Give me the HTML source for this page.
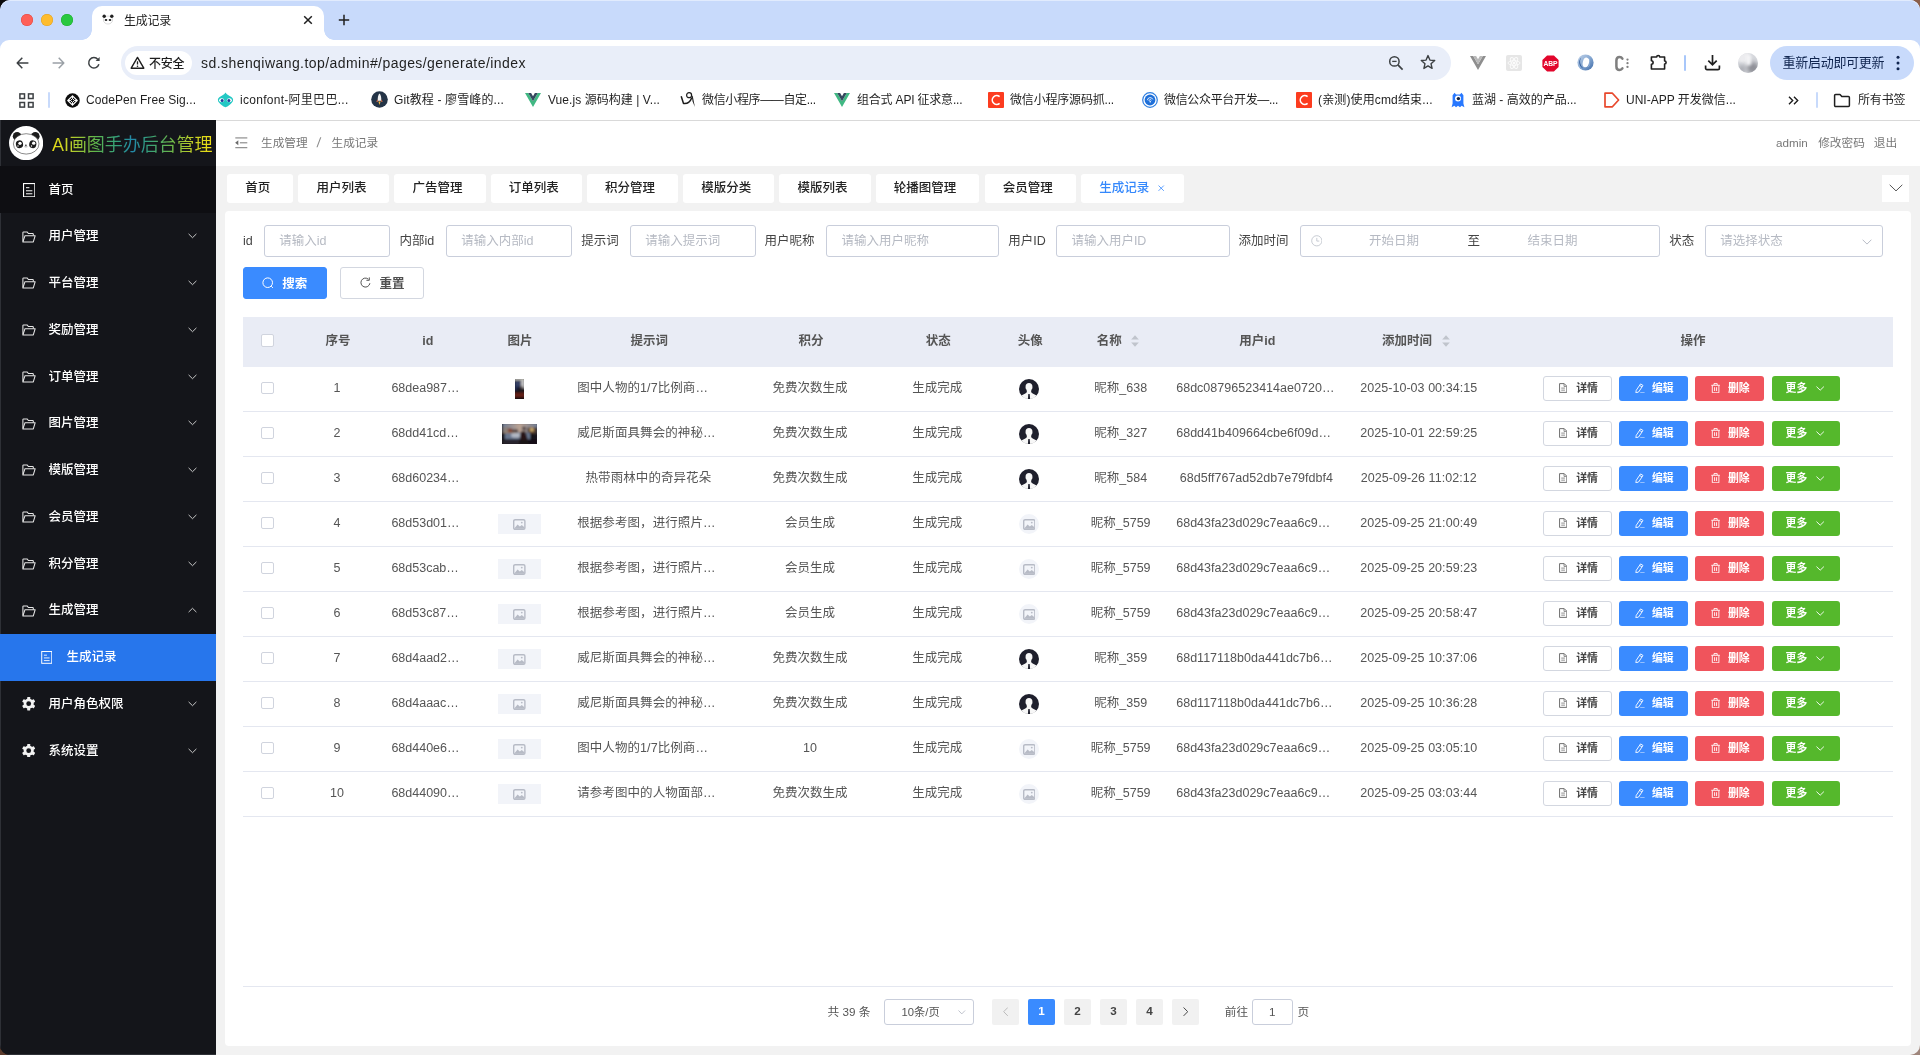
<!DOCTYPE html>
<html lang="zh-CN">
<head>
<meta charset="utf-8">
<title>生成记录</title>
<style>
*{box-sizing:border-box;margin:0;padding:0}
html,body{width:1920px;height:1055px;overflow:hidden;background:#f2f2f2}
body{font-family:"Liberation Sans","Noto Sans CJK SC",sans-serif;color:#303133;position:relative;-webkit-font-smoothing:antialiased}
.abs{position:absolute}
.cnr{position:absolute;width:14px;height:14px}
#win{position:absolute;left:0;top:0;width:1920px;height:1055px;border-radius:10px;overflow:hidden;background:linear-gradient(90deg,#14151a 0,#14151a 216px,#f2f2f2 216px);will-change:transform}
svg{display:block}
/* ---------- browser chrome ---------- */
#chrome{position:absolute;left:0;top:0;width:1920px;height:121px;background:#c8dafb;overflow:hidden}
#chrome .corner{position:absolute;width:12px;height:12px;background:#6b4a3a}
#tabstrip{position:absolute;left:0;top:0;width:1920px;height:40px;background:#c8dafb;border-radius:10px 10px 0 0;box-shadow:inset 0 1px 0 rgba(255,255,255,.45)}
.tl{position:absolute;top:14px;width:12px;height:12px;border-radius:50%}
#tab{position:absolute;left:92px;top:6px;width:232px;height:34px;background:#fff;border-radius:10px 10px 0 0}
#tab:before,#tab:after{content:"";position:absolute;bottom:0;width:10px;height:10px;background:radial-gradient(circle at 0 0,rgba(255,255,255,0) 9.5px,#fff 10px)}
#tab:before{left:-10px}
#tab:after{right:-10px;background:radial-gradient(circle at 100% 0,rgba(255,255,255,0) 9.5px,#fff 10px)}
#tabtitle{position:absolute;left:124px;top:12px;letter-spacing:-.25px;font-size:12px;line-height:18px;color:#1f1f1f}
#toolbar{position:absolute;left:0;top:40px;width:1920px;height:46px;background:#fff;border-radius:9px 9px 0 0}
#omni{position:absolute;left:121px;top:46px;width:1330px;height:34px;border-radius:17px;background:#e9eef9}
#chip{position:absolute;left:125px;top:51px;width:67px;height:24px;border-radius:12px;background:#fff}
#chip span{position:absolute;left:24px;top:3.5px;font-size:12px;line-height:18px;color:#1f1f1f;white-space:nowrap;font-weight:500;letter-spacing:-.2px}
#url{position:absolute;left:201px;top:53px;font-size:14px;line-height:20px;color:#1f1f1f;white-space:nowrap;letter-spacing:.44px}
#bookmarks{position:absolute;left:0;top:86px;width:1920px;height:35px;background:#fff;border-bottom:1px solid #d9d9d9}
.bm{position:absolute;top:91px;height:18px;font-size:12px;line-height:18px;color:#1f1f1f;white-space:nowrap}
.bmi{position:absolute;top:92px;width:16px;height:16px}
#update{position:absolute;left:1770px;top:46px;width:144px;height:34px;border-radius:17px;background:#c8dafb}
#update span{position:absolute;left:12.5px;top:8.4px;font-size:13px;line-height:18px;color:#10254f;white-space:nowrap;letter-spacing:-.28px}
/* ---------- page ---------- */
#side{position:absolute;left:0;top:120px;width:215.7px;height:935px;background:#14151a;overflow:hidden;box-shadow:inset 1px 0 0 #2e3036,inset 0 -1px 0 #2e3036}
#side .logo{position:absolute;left:9px;top:5.6px;width:34.2px;height:34.2px}
#side .title{position:absolute;left:52px;top:11.5px;font-size:18px;line-height:26px;white-space:nowrap;letter-spacing:-.05px;background:linear-gradient(90deg,#e9dc18 0%,#b9cf2a 12%,#5fb64c 27%,#2f9c80 42%,#2288aa 50%,#36a07a 60%,#6fb848 75%,#c8d224 88%,#efdf12 100%);-webkit-background-clip:text;background-clip:text;color:transparent;-webkit-text-fill-color:transparent}
#side .item{position:absolute;left:0;width:216px;height:47px}
#side .item.home{background:#0e0e12}
#side .item.act{background:#2776ec}
#side .mi{position:absolute}
#side .mt{position:absolute;font-size:12.5px;line-height:20px;color:#fff;font-weight:500;white-space:nowrap}
#head{position:absolute;left:216px;top:121px;width:1704px;height:45px;background:#fff}
.bc{position:absolute;top:133px;font-size:11.67px;line-height:20px;color:#777;white-space:nowrap}
.bc.hr{color:#777}
.tab{position:absolute;top:174px;height:29px;background:#fff;border-radius:3px;font-size:12.5px;line-height:29px;text-align:left;padding-left:18.2px;color:#222;font-weight:500;white-space:nowrap}
.tab.on{color:#3488fc}
#card{position:absolute;left:225px;top:211px;width:1686px;height:834.6px;background:#fff;border-radius:4px}
.fl{position:absolute;top:230.6px;font-size:12.5px;line-height:20px;color:#444;white-space:nowrap}
.ph{position:absolute;top:230.6px;font-size:12.5px;line-height:20px;color:#b6bac3;white-space:nowrap}
.inp{position:absolute;top:225.2px;height:31.6px;border:1px solid #c9cedb;border-radius:3px;background:#fff}
.inp span{position:absolute;left:14.2px;top:4.4px;font-size:12.5px;line-height:20px;color:#b6bac3;white-space:nowrap}
.btn{position:absolute;top:267px;height:31.8px;border:1px solid #d3d7e0;border-radius:3px;background:#fff}
.btn.pri{background:#3a8bff;border-color:#3a8bff}
.bt{position:absolute;top:273.8px;font-size:12.5px;line-height:20px;color:#505050;font-weight:700;white-space:nowrap}
.bt.w{color:#fff}
#thead{position:absolute;left:243px;top:317.3px;width:1650px;height:49.3px;background:#e9ecf5}
.th{position:absolute;top:331px;width:120px;text-align:center;font-size:12.5px;line-height:20px;color:#555;font-weight:700;white-space:nowrap}
.td{position:absolute;width:180px;text-align:center;font-size:12.5px;line-height:20px;color:#555;white-space:nowrap}
.ck{position:absolute;width:12.6px;height:12.6px;border:1px solid #d0d4de;border-radius:2px;background:#fff}
.rl{position:absolute;left:243px;width:1650px;height:1px;background:#e4e7f0}
.ob{position:absolute;height:25px;border-radius:3px}
.ot{position:absolute;font-size:10.83px;line-height:18px;color:#fff;font-weight:700;white-space:nowrap}
.pg{position:absolute;font-size:11.67px;line-height:20px;color:#555;white-space:nowrap}
.pb{position:absolute;top:999.1px;width:26.8px;height:25.6px;border-radius:2px;background:#f1f1f1;font-size:11.67px;line-height:24.6px;font-weight:700;color:#444;text-align:center}
.pb.on{background:#3a8bff;color:#fff}

</style>
</head>
<body>
<div class="cnr" style="left:0;top:0;background:#0b0b0d"></div><div class="cnr" style="right:0;top:0;background:#8a5e4a"></div><div class="cnr" style="left:0;bottom:0;background:#5a3a2c"></div><div class="cnr" style="right:0;bottom:0;background:#9f857b"></div>
<div id="win">
<div id="chrome">
  <div id="tabstrip"></div>
  <div class="tl" style="left:21px;background:#fe5f57;box-shadow:inset 0 0 0 .5px #e14640"></div>
  <div class="tl" style="left:41px;background:#febc2e;box-shadow:inset 0 0 0 .5px #dfa023"></div>
  <div class="tl" style="left:61px;background:#28c840;box-shadow:inset 0 0 0 .5px #1dad2b"></div>
  <div id="tab"></div>
  <div id="tabtitle">生成记录</div>
  <div id="toolbar"></div>
  <div id="omni"></div>
  <div id="chip"><span>不安全</span></div>
  <div id="url">sd.shenqiwang.top/admin#/pages/generate/index</div>
  <div id="update"><span>重新启动即可更新</span></div>
  <div id="bookmarks"></div>
  <!-- tab favicon + close + new tab -->
<svg class="abs" style="left:102px;top:14px" width="12" height="11" viewBox="0 0 12 11"><ellipse cx="6" cy="6" rx="4.6" ry="4" fill="#fff" stroke="#bbb" stroke-width=".5"/><circle cx="2.2" cy="2.2" r="1.7" fill="#222"/><circle cx="9.8" cy="2.2" r="1.7" fill="#222"/><ellipse cx="4" cy="6" rx="1.3" ry="1.1" fill="#222"/><ellipse cx="8" cy="6" rx="1.3" ry="1.1" fill="#222"/></svg>
<svg class="abs" style="left:303px;top:15px" width="10" height="10" viewBox="0 0 10 10"><path d="M1.2 1.2L8.8 8.8M8.8 1.2L1.2 8.8" stroke="#1f1f1f" stroke-width="1.5" fill="none"/></svg>
<svg class="abs" style="left:338px;top:14px" width="12" height="12" viewBox="0 0 12 12"><path d="M6 .8V11.2M.8 6H11.2" stroke="#1f1f1f" stroke-width="1.5" fill="none"/></svg>
<!-- nav -->
<svg class="abs" style="left:16px;top:57px" width="13" height="12" viewBox="0 0 13 12"><path d="M6.3 .8L1.2 6L6.3 11.2M1.4 6H12.4" stroke="#3c4043" stroke-width="1.5" fill="none" stroke-linejoin="round"/></svg>
<svg class="abs" style="left:52px;top:57px" width="13" height="12" viewBox="0 0 13 12"><path d="M6.7 .8L11.8 6L6.7 11.2M11.6 6H.6" stroke="#9aa0a6" stroke-width="1.5" fill="none" stroke-linejoin="round"/></svg>
<svg class="abs" style="left:87px;top:56px" width="14" height="14" viewBox="0 0 14 14"><path d="M11.9 8.3A5.2 5.2 0 1 1 10.9 3.4" stroke="#3c4043" stroke-width="1.5" fill="none"/><path d="M12.6 .9V4.9H8.6z" fill="#3c4043"/></svg>
<!-- warning -->
<svg class="abs" style="left:130px;top:56px" width="15" height="13" viewBox="0 0 15 13"><path d="M7.5 1.4L13.8 12.2H1.2z" stroke="#1f1f1f" stroke-width="1.4" fill="none" stroke-linejoin="round"/><path d="M7.5 5.2V8.6" stroke="#1f1f1f" stroke-width="1.3"/><circle cx="7.5" cy="10.3" r=".8" fill="#1f1f1f"/></svg>
<!-- zoom + star -->
<svg class="abs" style="left:1388px;top:55px" width="16" height="16" viewBox="0 0 16 16"><circle cx="6.4" cy="6.4" r="4.7" stroke="#3c4043" stroke-width="1.5" fill="none"/><path d="M9.9 9.9L14.6 14.6" stroke="#3c4043" stroke-width="1.7"/><path d="M4.2 6.4H8.6" stroke="#3c4043" stroke-width="1.3"/></svg>
<svg class="abs" style="left:1420px;top:54px" width="16" height="16" viewBox="0 0 16 16"><path d="M8 1.6L9.9 6.1L14.7 6.5L11 9.7L12.1 14.4L8 11.9L3.9 14.4L5 9.7L1.3 6.5L6.1 6.1z" stroke="#3c4043" stroke-width="1.4" fill="none" stroke-linejoin="round"/></svg>
<!-- extensions -->
<svg class="abs" style="left:1470px;top:56px" width="16" height="14" viewBox="0 0 16 14"><path d="M0 0H3.2L8 8.3L12.8 0H16L8 14z" fill="#8e8e8e"/><path d="M3.2 0H6.1L8 3.3L9.9 0H12.8L8 8.3z" fill="#b9b9b9"/></svg>
<div class="abs" style="left:1506px;top:55px;width:16px;height:16px;background:#e6e6e6;border-radius:2px"></div>
<svg class="abs" style="left:1506px;top:55px" width="16" height="16" viewBox="0 0 16 16"><g fill="none" stroke="#fbfbfb" stroke-width="1"><ellipse cx="8" cy="8" rx="6" ry="2.3"/><ellipse cx="8" cy="8" rx="6" ry="2.3" transform="rotate(60 8 8)"/><ellipse cx="8" cy="8" rx="6" ry="2.3" transform="rotate(120 8 8)"/></g><circle cx="8" cy="8" r="1.3" fill="#fbfbfb"/></svg>
<svg class="abs" style="left:1541.6px;top:54.6px" width="17" height="17" viewBox="0 0 17 17"><path d="M5.1 .4H11.9L16.6 5.1V11.9L11.9 16.6H5.1L.4 11.9V5.1z" fill="#e2062c"/><text x="8.5" y="11.3" font-family="Liberation Sans,sans-serif" font-size="7.6" font-weight="700" fill="#fff" text-anchor="middle" textLength="14.2" lengthAdjust="spacingAndGlyphs">ABP</text></svg>
<svg class="abs" style="left:1577.4px;top:54.4px" width="17" height="17" viewBox="0 0 17 17"><linearGradient id="rg1" x1="0" y1="0" x2="1" y2="1"><stop offset="0" stop-color="#c3d4ea"/><stop offset=".5" stop-color="#86a8d2"/><stop offset="1" stop-color="#3d69a6"/></linearGradient><circle cx="8.5" cy="8.5" r="8.1" fill="url(#rg1)"/><path d="M4.2 3.6A6.6 6.6 0 0 0 6.2 14.4A8.6 8.6 0 0 1 4.2 3.6z" fill="#345f9d"/><ellipse cx="8.9" cy="8.4" rx="3.1" ry="4.9" fill="#fff" transform="rotate(14 8.9 8.4)"/><path d="M11.2 3.4A7 7 0 0 1 10.6 13.6A9 9 0 0 0 11.2 3.4z" fill="#a9c2e2"/></svg>
<svg class="abs" style="left:1613.6px;top:54.6px" width="17" height="17" viewBox="0 0 17 17"><path d="M8.4 3.6C7.8 2.6 6.8 2.1 5.6 2.1C3.6 2.1 2.4 3.6 2.4 5.6V11.4C2.4 13.4 3.6 14.9 5.6 14.9C6.8 14.9 7.8 14.4 8.4 13.4" stroke="#7f7f7f" stroke-width="2.5" fill="none" stroke-linecap="round"/><circle cx="13.5" cy="4.6" r="1.15" fill="#7f7f7f"/><circle cx="13.5" cy="8.2" r="1.15" fill="#7f7f7f"/><circle cx="13.5" cy="11.9" r="1.15" fill="#7f7f7f"/></svg>
<svg class="abs" style="left:1649px;top:52px" width="19" height="19" viewBox="0 0 19 19"><path d="M2.4 5H7.7A1.5 1.5 0 0 1 10.7 5H15.6V9A1.5 1.5 0 0 1 15.6 12V17H2.4V12.2A1.7 1.7 0 0 0 2.4 8.8z" stroke="#1f1f1f" stroke-width="1.6" fill="none" stroke-linejoin="round"/></svg>
<div class="abs" style="left:1684px;top:55px;width:2px;height:16px;background:#a8c7fa;border-radius:1px"></div>
<svg class="abs" style="left:1703.5px;top:54.4px" width="17" height="17" viewBox="0 0 17 17"><path d="M8.5 1V10.4M4.3 6.6L8.5 10.8L12.7 6.6" stroke="#1f1f1f" stroke-width="1.7" fill="none"/><path d="M1.6 11.6V14.2A1.4 1.4 0 0 0 3 15.6H14A1.4 1.4 0 0 0 15.4 14.2V11.6" stroke="#1f1f1f" stroke-width="1.7" fill="none"/></svg>
<div class="abs" style="left:1738px;top:53px;width:20px;height:20px;border-radius:50%;overflow:hidden;background:#d5d7dc"><div class="abs" style="left:-2px;top:-3px;width:14px;height:13px;border-radius:50%;background:#ececef;filter:blur(1.5px)"></div><div class="abs" style="left:9px;top:9px;width:12px;height:12px;border-radius:50%;background:#8f9097;filter:blur(2px)"></div><div class="abs" style="left:0px;top:12px;width:8px;height:8px;border-radius:50%;background:#a9abb2;filter:blur(2px)"></div><div class="abs" style="left:8px;top:2px;width:5px;height:10px;background:#f3f3f5;filter:blur(1.5px)"></div></div>
<svg class="abs" style="left:1896px;top:55px" width="4" height="16" viewBox="0 0 4 16"><circle cx="2" cy="2.3" r="1.5" fill="#10254f"/><circle cx="2" cy="8" r="1.5" fill="#10254f"/><circle cx="2" cy="13.7" r="1.5" fill="#10254f"/></svg>

  <!-- apps grid -->
<svg class="abs" style="left:19px;top:93px" width="15" height="15" viewBox="0 0 15 15"><g fill="none" stroke="#3c4043" stroke-width="1.5"><rect x=".9" y=".9" width="4.6" height="4.6"/><rect x="9.5" y=".9" width="4.6" height="4.6"/><rect x=".9" y="9.5" width="4.6" height="4.6"/><rect x="9.5" y="9.5" width="4.6" height="4.6"/></g></svg>
<div class="abs" style="left:48px;top:92px;width:2px;height:16px;background:#c8dafb;border-radius:1px"></div>
<!-- codepen -->
<svg class="bmi" style="left:64.6px;top:92.6px;width:15px;height:15px" viewBox="0 0 16 16"><circle cx="8" cy="8" r="7.7" fill="#0d0d0d"/><path d="M8 3L13 8L8 13L3 8z" stroke="#fff" stroke-width="1.25" fill="none" stroke-linejoin="round"/><path d="M8 5.9L10.1 8L8 10.1L5.9 8z" stroke="#fff" stroke-width="1.05" fill="none" stroke-linejoin="round"/><path d="M8 3V5.9M8 10.1V13M3 8H5.9M10.1 8H13" stroke="#fff" stroke-width="1.05"/></svg>
<div class="bm" style="left:86px;letter-spacing:0.07px">CodePen Free Sig...</div>
<!-- iconfont -->
<svg class="bmi" style="left:217px;width:17px" viewBox="0 0 17 16"><path d="M8.5 .4C9.8 2.6 12 3.6 14.4 5C16.6 6.3 16.6 9 15 10.6C13.3 12.4 11.2 14.6 8.5 15.2C5.8 14.6 3.7 12.4 2 10.6C.4 9 .4 6.3 2.6 5C5 3.6 7.2 2.6 8.5 .4z" fill="#23c8c4"/><ellipse cx="4.6" cy="8.2" rx="2.5" ry="2" fill="#fff"/><ellipse cx="12.4" cy="8.2" rx="2.5" ry="2" fill="#fff"/><circle cx="5.1" cy="8.4" r="1.5" fill="#1b3f9c"/><circle cx="11.9" cy="8.4" r="1.5" fill="#1b3f9c"/></svg>
<div class="bm" style="left:240px;letter-spacing:0.28px">iconfont-阿里巴巴...</div>
<!-- git rocket -->
<svg class="bmi" style="left:371px;width:17px;height:17px;top:91px" viewBox="0 0 17 17"><circle cx="8.5" cy="8.5" r="8.3" fill="#243447"/><path d="M8.5 2.6C10 4.2 10.4 6.6 10.2 9.8H6.8C6.6 6.6 7 4.2 8.5 2.6z" fill="#f2f2f2"/><path d="M6.8 8.2L5.2 10.8H6.9zM10.2 8.2L11.8 10.8H10.1z" fill="#e8734a"/><path d="M7.4 10.4H9.6L8.5 14z" fill="#f5b83d"/></svg>
<div class="bm" style="left:394px;letter-spacing:0.13px">Git教程 - 廖雪峰的...</div>
<!-- vue -->
<svg class="bmi" style="left:525px;top:93px;height:14px" viewBox="0 0 16 14"><path d="M0 0H3.2L8 8.3L12.8 0H16L8 14z" fill="#41b883"/><path d="M3.2 0H6.1L8 3.3L9.9 0H12.8L8 8.3z" fill="#34495e"/></svg>
<div class="bm" style="left:548px;letter-spacing:0.06px">Vue.js 源码构建 | V...</div>
<!-- weixin scribble -->
<svg class="bmi" style="left:680px;width:16px" viewBox="0 0 16 16"><path d="M1.2 4.2L3.5 11.4C7 11.8 10.4 9.4 11.9 5.4" stroke="#1c1c1c" stroke-width="1.5" fill="none" stroke-linejoin="round"/><circle cx="9.1" cy="3.2" r="2.5" stroke="#1c1c1c" stroke-width="1.2" fill="none"/><path d="M11.5 2.8L12.8 4.4L14.9 15L12.6 9.4z" fill="#1c1c1c"/></svg>
<div class="bm" style="left:702px;letter-spacing:-0.36px">微信小程序——自定...</div>
<!-- vue -->
<svg class="bmi" style="left:834px;top:93px;height:14px" viewBox="0 0 16 14"><path d="M0 0H3.2L8 8.3L12.8 0H16L8 14z" fill="#41b883"/><path d="M3.2 0H6.1L8 3.3L9.9 0H12.8L8 8.3z" fill="#34495e"/></svg>
<div class="bm" style="left:857px;letter-spacing:-0.19px">组合式 API 征求意...</div>
<!-- C red -->
<svg class="bmi" style="left:988px" viewBox="0 0 16 16"><rect width="16" height="16" rx="1" fill="#fc3c1f"/><path d="M11.6 4.7A4.4 4.4 0 1 0 11.6 11.3" stroke="#fff" stroke-width="1.6" fill="none"/></svg>
<div class="bm" style="left:1010px;letter-spacing:-0.18px">微信小程序源码抓...</div>
<!-- blue circle -->
<svg class="bmi" style="left:1142px" viewBox="0 0 16 16"><circle cx="8" cy="8" r="7.3" fill="#fff" stroke="#2f7fe0" stroke-width="1.2"/><circle cx="8" cy="8" r="5.4" fill="#1e6fd9"/><path d="M5.4 8.2A2.8 2.8 0 0 1 10.8 7.4M6.9 8.8A1.4 1.4 0 0 1 9.4 8.2" stroke="#fff" stroke-width=".9" fill="none"/><circle cx="8.2" cy="9.8" r=".8" fill="#fff"/></svg>
<div class="bm" style="left:1164px;letter-spacing:-0.33px">微信公众平台开发—...</div>
<!-- C red -->
<svg class="bmi" style="left:1296px" viewBox="0 0 16 16"><rect width="16" height="16" rx="1" fill="#fc3c1f"/><path d="M11.6 4.7A4.4 4.4 0 1 0 11.6 11.3" stroke="#fff" stroke-width="1.6" fill="none"/></svg>
<div class="bm" style="left:1318px;letter-spacing:0.14px">(亲测)使用cmd结束...</div>
<!-- lanhu -->
<svg class="bmi" style="left:1451px;width:14px" viewBox="0 0 14 16"><path d="M1.6 3.2L3.6 .8L5 2.6H9L10.4 .8L12.4 3.2V11.4L13.4 15.2L10.6 13.8L9 15.2L7 13.8L5 15.2L3.4 13.8L.6 15.2L1.6 11.4z" fill="#2878ff"/><circle cx="7" cy="6.6" r="3" fill="#fff"/><circle cx="7.4" cy="6.6" r="1.7" fill="#12203f"/></svg>
<div class="bm" style="left:1472px">蓝湖 - 高效的产品...</div>
<!-- uni-app D -->
<svg class="bmi" style="left:1603px;width:17px" viewBox="0 0 17 16"><path d="M2 1.2H9.4L15.6 8L9.4 14.8H2z" stroke="#e8482c" stroke-width="1.7" fill="none" stroke-linejoin="round"/></svg>
<div class="bm" style="left:1626px">UNI-APP 开发微信...</div>
<svg class="abs" style="left:1788px;top:96px" width="11" height="9" viewBox="0 0 11 9"><path d="M1 .8L4.7 4.5L1 8.2M6 .8L9.7 4.5L6 8.2" stroke="#1f1f1f" stroke-width="1.4" fill="none"/></svg>
<div class="abs" style="left:1816px;top:92px;width:2px;height:16px;background:#c8dafb;border-radius:1px"></div>
<svg class="abs" style="left:1833px;top:93px" width="18" height="15" viewBox="0 0 18 15"><path d="M1.6 2.6A1 1 0 0 1 2.6 1.6H7L8.8 3.6H15.4A1 1 0 0 1 16.4 4.6V12.4A1 1 0 0 1 15.4 13.4H2.6A1 1 0 0 1 1.6 12.4z" stroke="#1f1f1f" stroke-width="1.5" fill="none" stroke-linejoin="round"/></svg>
<div class="bm" style="left:1858px;letter-spacing:-0.17px">所有书签</div>

</div>
<div id="side">
<div class="logo"><svg width="34.2" height="34.2" viewBox="0 0 34.2 34.2"><circle cx="17.1" cy="17.1" r="17.1" fill="#fff"/><circle cx="8.1" cy="10.3" r="4.3" fill="#1c1c1c"/><circle cx="26.3" cy="10.3" r="4.3" fill="#1c1c1c"/><ellipse cx="17.2" cy="17.9" rx="12.8" ry="10.2" fill="#fff" stroke="#2a2a2a" stroke-width=".55"/><ellipse cx="10.5" cy="18.3" rx="3.6" ry="3.9" fill="#1c1c1c" transform="rotate(-12 10.5 18.3)"/><ellipse cx="23.8" cy="18.3" rx="3.6" ry="3.9" fill="#1c1c1c" transform="rotate(12 23.8 18.3)"/><circle cx="11" cy="17.3" r="1.65" fill="#fff"/><circle cx="24.7" cy="17.2" r="1.65" fill="#fff"/><circle cx="9" cy="20" r=".65" fill="#fff"/><circle cx="22.5" cy="20" r=".65" fill="#fff"/><ellipse cx="16.9" cy="19.3" rx="1" ry=".8" fill="#444"/><ellipse cx="16.9" cy="20.8" rx="1.8" ry=".7" fill="#bbb"/></svg></div>
<div class="title">AI画图手办后台管理</div>
<div class="item home" style="top:46.0px"></div>
<svg class="mi" style="left:22.7px;top:62.7px" width="12.4" height="14.4" viewBox="0 0 12.4 14.4"><rect x=".55" y=".55" width="11.3" height="13.3" stroke="#fff" stroke-width="1.1" fill="none"/><path d="M3 4.7H6.4M3 7.8H9.4M3 10.8H9.4" stroke="#fff" stroke-width="1"/></svg>
<div class="mt" style="left:48.5px;top:59.5px">首页</div>
<div class="item" style="top:92.8px"></div>
<svg class="mi" style="left:21.5px;top:110.7px" width="14" height="12" viewBox="0 0 14 12"><path d="M.9 10.6V1.6A.7.7 0 0 1 1.6 .9H5.2L6.4 2.5H10.6A.7.7 0 0 1 11.3 3.2V4.6" stroke="#e8e8e8" stroke-width="1.05" fill="none"/><path d="M.9 10.9L3 4.7H13.2L11.3 10.9z" stroke="#e8e8e8" stroke-width="1.05" fill="none" stroke-linejoin="round"/></svg>
<div class="mt" style="left:48.5px;top:106.3px">用户管理</div>
<svg class="mi" style="left:187.8px;top:113.3px" width="9" height="6" viewBox="0 0 9 6"><path d="M.6 .9L4.5 4.7L8.4 .9" stroke="#c8c8c8" stroke-width="1" fill="none"/></svg>
<div class="item" style="top:139.5px"></div>
<svg class="mi" style="left:21.5px;top:157.4px" width="14" height="12" viewBox="0 0 14 12"><path d="M.9 10.6V1.6A.7.7 0 0 1 1.6 .9H5.2L6.4 2.5H10.6A.7.7 0 0 1 11.3 3.2V4.6" stroke="#e8e8e8" stroke-width="1.05" fill="none"/><path d="M.9 10.9L3 4.7H13.2L11.3 10.9z" stroke="#e8e8e8" stroke-width="1.05" fill="none" stroke-linejoin="round"/></svg>
<div class="mt" style="left:48.5px;top:153.0px">平台管理</div>
<svg class="mi" style="left:187.8px;top:160.0px" width="9" height="6" viewBox="0 0 9 6"><path d="M.6 .9L4.5 4.7L8.4 .9" stroke="#c8c8c8" stroke-width="1" fill="none"/></svg>
<div class="item" style="top:186.2px"></div>
<svg class="mi" style="left:21.5px;top:204.2px" width="14" height="12" viewBox="0 0 14 12"><path d="M.9 10.6V1.6A.7.7 0 0 1 1.6 .9H5.2L6.4 2.5H10.6A.7.7 0 0 1 11.3 3.2V4.6" stroke="#e8e8e8" stroke-width="1.05" fill="none"/><path d="M.9 10.9L3 4.7H13.2L11.3 10.9z" stroke="#e8e8e8" stroke-width="1.05" fill="none" stroke-linejoin="round"/></svg>
<div class="mt" style="left:48.5px;top:199.8px">奖励管理</div>
<svg class="mi" style="left:187.8px;top:206.8px" width="9" height="6" viewBox="0 0 9 6"><path d="M.6 .9L4.5 4.7L8.4 .9" stroke="#c8c8c8" stroke-width="1" fill="none"/></svg>
<div class="item" style="top:233.0px"></div>
<svg class="mi" style="left:21.5px;top:250.9px" width="14" height="12" viewBox="0 0 14 12"><path d="M.9 10.6V1.6A.7.7 0 0 1 1.6 .9H5.2L6.4 2.5H10.6A.7.7 0 0 1 11.3 3.2V4.6" stroke="#e8e8e8" stroke-width="1.05" fill="none"/><path d="M.9 10.9L3 4.7H13.2L11.3 10.9z" stroke="#e8e8e8" stroke-width="1.05" fill="none" stroke-linejoin="round"/></svg>
<div class="mt" style="left:48.5px;top:246.5px">订单管理</div>
<svg class="mi" style="left:187.8px;top:253.5px" width="9" height="6" viewBox="0 0 9 6"><path d="M.6 .9L4.5 4.7L8.4 .9" stroke="#c8c8c8" stroke-width="1" fill="none"/></svg>
<div class="item" style="top:279.8px"></div>
<svg class="mi" style="left:21.5px;top:297.7px" width="14" height="12" viewBox="0 0 14 12"><path d="M.9 10.6V1.6A.7.7 0 0 1 1.6 .9H5.2L6.4 2.5H10.6A.7.7 0 0 1 11.3 3.2V4.6" stroke="#e8e8e8" stroke-width="1.05" fill="none"/><path d="M.9 10.9L3 4.7H13.2L11.3 10.9z" stroke="#e8e8e8" stroke-width="1.05" fill="none" stroke-linejoin="round"/></svg>
<div class="mt" style="left:48.5px;top:293.3px">图片管理</div>
<svg class="mi" style="left:187.8px;top:300.3px" width="9" height="6" viewBox="0 0 9 6"><path d="M.6 .9L4.5 4.7L8.4 .9" stroke="#c8c8c8" stroke-width="1" fill="none"/></svg>
<div class="item" style="top:326.5px"></div>
<svg class="mi" style="left:21.5px;top:344.4px" width="14" height="12" viewBox="0 0 14 12"><path d="M.9 10.6V1.6A.7.7 0 0 1 1.6 .9H5.2L6.4 2.5H10.6A.7.7 0 0 1 11.3 3.2V4.6" stroke="#e8e8e8" stroke-width="1.05" fill="none"/><path d="M.9 10.9L3 4.7H13.2L11.3 10.9z" stroke="#e8e8e8" stroke-width="1.05" fill="none" stroke-linejoin="round"/></svg>
<div class="mt" style="left:48.5px;top:340.0px">模版管理</div>
<svg class="mi" style="left:187.8px;top:347.0px" width="9" height="6" viewBox="0 0 9 6"><path d="M.6 .9L4.5 4.7L8.4 .9" stroke="#c8c8c8" stroke-width="1" fill="none"/></svg>
<div class="item" style="top:373.2px"></div>
<svg class="mi" style="left:21.5px;top:391.2px" width="14" height="12" viewBox="0 0 14 12"><path d="M.9 10.6V1.6A.7.7 0 0 1 1.6 .9H5.2L6.4 2.5H10.6A.7.7 0 0 1 11.3 3.2V4.6" stroke="#e8e8e8" stroke-width="1.05" fill="none"/><path d="M.9 10.9L3 4.7H13.2L11.3 10.9z" stroke="#e8e8e8" stroke-width="1.05" fill="none" stroke-linejoin="round"/></svg>
<div class="mt" style="left:48.5px;top:386.8px">会员管理</div>
<svg class="mi" style="left:187.8px;top:393.8px" width="9" height="6" viewBox="0 0 9 6"><path d="M.6 .9L4.5 4.7L8.4 .9" stroke="#c8c8c8" stroke-width="1" fill="none"/></svg>
<div class="item" style="top:420.0px"></div>
<svg class="mi" style="left:21.5px;top:437.9px" width="14" height="12" viewBox="0 0 14 12"><path d="M.9 10.6V1.6A.7.7 0 0 1 1.6 .9H5.2L6.4 2.5H10.6A.7.7 0 0 1 11.3 3.2V4.6" stroke="#e8e8e8" stroke-width="1.05" fill="none"/><path d="M.9 10.9L3 4.7H13.2L11.3 10.9z" stroke="#e8e8e8" stroke-width="1.05" fill="none" stroke-linejoin="round"/></svg>
<div class="mt" style="left:48.5px;top:433.5px">积分管理</div>
<svg class="mi" style="left:187.8px;top:440.5px" width="9" height="6" viewBox="0 0 9 6"><path d="M.6 .9L4.5 4.7L8.4 .9" stroke="#c8c8c8" stroke-width="1" fill="none"/></svg>
<div class="item" style="top:466.8px"></div>
<svg class="mi" style="left:21.5px;top:484.7px" width="14" height="12" viewBox="0 0 14 12"><path d="M.9 10.6V1.6A.7.7 0 0 1 1.6 .9H5.2L6.4 2.5H10.6A.7.7 0 0 1 11.3 3.2V4.6" stroke="#e8e8e8" stroke-width="1.05" fill="none"/><path d="M.9 10.9L3 4.7H13.2L11.3 10.9z" stroke="#e8e8e8" stroke-width="1.05" fill="none" stroke-linejoin="round"/></svg>
<div class="mt" style="left:48.5px;top:480.3px">生成管理</div>
<svg class="mi" style="left:187.8px;top:486.9px" width="9" height="6" viewBox="0 0 9 6"><path d="M.6 5.1L4.5 1.3L8.4 5.1" stroke="#c8c8c8" stroke-width="1" fill="none"/></svg>
<div class="item act" style="top:513.5px"></div>
<svg class="mi" style="left:40.8px;top:530.9px" width="11.5" height="12.8" viewBox="0 0 12.4 14.4"><rect x=".55" y=".55" width="11.3" height="13.3" stroke="#fff" stroke-width="1.1" fill="none"/><path d="M3 4.7H6.4M3 7.8H9.4M3 10.8H9.4" stroke="#fff" stroke-width="1"/></svg>
<div class="mt" style="left:66.5px;top:527.0px">生成记录</div>
<div class="item" style="top:560.2px"></div>
<svg class="mi" style="left:21.5px;top:577.4px" width="13.4" height="13.4" viewBox="0 0 14 14"><g fill="#f2f2f2"><rect x="5.4" y="0" width="3.2" height="14" rx=".5"/><rect x="5.4" y="0" width="3.2" height="14" rx=".5" transform="rotate(60 7 7)"/><rect x="5.4" y="0" width="3.2" height="14" rx=".5" transform="rotate(120 7 7)"/><circle cx="7" cy="7" r="5.3"/></g><circle cx="7" cy="7" r="2.5" fill="#14151a"/></svg>
<div class="mt" style="left:48.5px;top:573.8px">用户角色权限</div>
<svg class="mi" style="left:187.8px;top:580.8px" width="9" height="6" viewBox="0 0 9 6"><path d="M.6 .9L4.5 4.7L8.4 .9" stroke="#c8c8c8" stroke-width="1" fill="none"/></svg>
<div class="item" style="top:607.0px"></div>
<svg class="mi" style="left:21.5px;top:624.1px" width="13.4" height="13.4" viewBox="0 0 14 14"><g fill="#f2f2f2"><rect x="5.4" y="0" width="3.2" height="14" rx=".5"/><rect x="5.4" y="0" width="3.2" height="14" rx=".5" transform="rotate(60 7 7)"/><rect x="5.4" y="0" width="3.2" height="14" rx=".5" transform="rotate(120 7 7)"/><circle cx="7" cy="7" r="5.3"/></g><circle cx="7" cy="7" r="2.5" fill="#14151a"/></svg>
<div class="mt" style="left:48.5px;top:620.5px">系统设置</div>
<svg class="mi" style="left:187.8px;top:627.5px" width="9" height="6" viewBox="0 0 9 6"><path d="M.6 .9L4.5 4.7L8.4 .9" stroke="#c8c8c8" stroke-width="1" fill="none"/></svg>
</div>
<div id="head"></div>
<svg class="abs" style="left:233.8px;top:137.2px" width="14.6" height="12" viewBox="0 0 15 13"><path d="M1 1H14M6 6.3H14M1 11.6H14" stroke="#6b6b6b" stroke-width="1" fill="none"/><path d="M4.3 3.6V9L.8 6.3z" fill="#6b6b6b"/></svg>
<div class="bc" style="left:261px">生成管理</div><div class="bc" style="left:317.4px;color:#8a8a8a;font-size:13.5px;transform:skewX(-6deg)">/</div><div class="bc" style="left:331.5px">生成记录</div>
<div class="bc hr" style="left:1776px">admin</div><div class="bc hr" style="left:1818.2px">修改密码</div><div class="bc hr" style="left:1873.8px">退出</div>
<div class="tab" style="left:227px;width:66.25px">首页</div>
<div class="tab" style="left:298.2px;width:91.25px">用户列表</div>
<div class="tab" style="left:394.4px;width:91.25px">广告管理</div>
<div class="tab" style="left:490.6px;width:91.25px">订单列表</div>
<div class="tab" style="left:586.9px;width:91.25px">积分管理</div>
<div class="tab" style="left:683.1px;width:91.25px">模版分类</div>
<div class="tab" style="left:779.3px;width:91.25px">模版列表</div>
<div class="tab" style="left:875.6px;width:103.9px">轮播图管理</div>
<div class="tab" style="left:984.6px;width:91.25px">会员管理</div>
<div class="tab on" style="left:1081px;width:103.2px">生成记录</div>
<svg class="abs" style="left:1158.3px;top:185px" width="6.4" height="6.4" viewBox="0 0 7 7"><path d="M.6 .6L6.4 6.4M6.4 .6L.6 6.4" stroke="#3a8bff" stroke-width=".9" fill="none"/></svg>
<div class="abs" style="left:1882px;top:175px;width:27px;height:27px;background:#fff"></div>
<svg class="abs" style="left:1888.5px;top:184.3px" width="14" height="8" viewBox="0 0 14 8"><path d="M.7 .8L7 6.9L13.3 .8" stroke="#555" stroke-width="1" fill="none"/></svg>
<div id="card"></div>
<div class="fl" style="left:243px">id</div>
<div class="inp" style="left:264px;width:125.8px"><span>请输入id</span></div>
<div class="fl" style="left:399.6px">内部id</div>
<div class="inp" style="left:446px;width:125.8px"><span>请输入内部id</span></div>
<div class="fl" style="left:581.3px">提示词</div>
<div class="inp" style="left:630px;width:125.8px"><span>请输入提示词</span></div>
<div class="fl" style="left:764.4px">用户昵称</div>
<div class="inp" style="left:826.2px;width:172.5px"><span>请输入用户昵称</span></div>
<div class="fl" style="left:1008.3px">用户ID</div>
<div class="inp" style="left:1056.2px;width:173.8px"><span>请输入用户ID</span></div>
<div class="fl" style="left:1238.5px">添加时间</div>
<div class="inp" style="left:1300.4px;width:359.2px"></div>
<svg class="abs" style="left:1310.8px;top:235.2px" width="11.6" height="11.6" viewBox="0 0 12 12"><circle cx="6" cy="6" r="5.3" stroke="#c0c4cc" stroke-width=".9" fill="none"/><path d="M6 3V6.3H8.6" stroke="#c0c4cc" stroke-width=".9" fill="none"/></svg>
<div class="ph" style="left:1369px">开始日期</div><div class="fl" style="left:1467.4px">至</div><div class="ph" style="left:1527.4px">结束日期</div>
<div class="fl" style="left:1669.2px">状态</div>
<div class="inp" style="left:1705px;width:177.8px"><span>请选择状态</span></div>
<svg class="abs" style="left:1862.3px;top:239px" width="10" height="6" viewBox="0 0 10 6"><path d="M.6 .7L5 5.1L9.4 .7" stroke="#b8bcc6" stroke-width="1" fill="none"/></svg>
<div class="btn pri" style="left:243px;width:84px"></div>
<svg class="abs" style="left:262.4px;top:276.8px" width="13" height="13" viewBox="0 0 13 13"><circle cx="5.7" cy="5.7" r="4.8" stroke="#fff" stroke-width="1" fill="none"/><path d="M9.2 9.2L10.9 10.9" stroke="#fff" stroke-width="1"/></svg>
<div class="bt w" style="left:282.3px">搜索</div>
<div class="btn" style="left:340px;width:83.8px"></div>
<svg class="abs" style="left:360.3px;top:277.3px" width="11" height="11" viewBox="0 0 11 11"><path d="M9.9 6.2A4.5 4.5 0 1 1 8.4 2.2" stroke="#555" stroke-width="1" fill="none"/><path d="M9.3 .4V3.3H6.4" stroke="#555" stroke-width="1" fill="none"/></svg>
<div class="bt" style="left:379.6px">重置</div>
<div id="thead"></div>
<div class="ck" style="left:261.2px;top:334.2px"></div>
<div class="th" style="left:278px">序号</div>
<div class="th" style="left:367.9px">id</div>
<div class="th" style="left:460px">图片</div>
<div class="th" style="left:589.3px">提示词</div>
<div class="th" style="left:751px">积分</div>
<div class="th" style="left:878.3px">状态</div>
<div class="th" style="left:970.2px">头像</div>
<div class="th" style="left:1049.2px">名称</div>
<div class="th" style="left:1197.3px">用户id</div>
<div class="th" style="left:1346.9px">添加时间</div>
<div class="th" style="left:1633px">操作</div>
<svg class="abs" style="left:1131px;top:334.6px" width="8" height="12" viewBox="0 0 8 12"><path d="M4 .3L7.8 4.4H.2z" fill="#c0c4cc"/><path d="M4 11.7L7.8 7.6H.2z" fill="#c0c4cc"/></svg>
<svg class="abs" style="left:1442px;top:334.6px" width="8" height="12" viewBox="0 0 8 12"><path d="M4 .3L7.8 4.4H.2z" fill="#c0c4cc"/><path d="M4 11.7L7.8 7.6H.2z" fill="#c0c4cc"/></svg>
<div class="rl" style="top:411px"></div>
<div class="ck" style="left:261.2px;top:381.5px"></div>
<div class="td" style="left:247px;top:378.2px;">1</div>
<div class="td" style="left:391.4px;top:378.2px;width:auto;text-align:left;">68dea987…</div>
<svg class="abs" style="left:515px;top:379.0px" width="9" height="20" viewBox="0 0 9 20"><defs><filter id="b1" x="0" y="0" width="1" height="1"><feGaussianBlur stdDeviation=".8"/></filter><clipPath id="k1"><rect width="9" height="20"/></clipPath></defs><rect width="9" height="20" fill="#1a1518"/><g clip-path="url(#k1)"><g filter="url(#b1)"><rect x="-1" y="-1" width="11" height="22" fill="#1a1518"/><rect x="-1" y="-1" width="11" height="2.8" fill="#d9d9cd"/><rect x="-1" y="1.6" width="7" height="9.5" fill="#222d56"/><rect x="6" y="1.2" width="4" height="8" fill="#d9d9d9"/><rect x="1.4" y="2.5" width=".9" height="5" fill="#8fa0c8" opacity=".6"/><rect x="3.6" y="2.5" width=".9" height="5" fill="#8fa0c8" opacity=".6"/><rect x="2.6" y="8" width="2" height="7" fill="#141416"/><rect x="5.4" y="7" width="2.4" height="8" fill="#2a2022"/><circle cx="6.5" cy="8" r=".8" fill="#cbb9ad"/><rect x="-1" y="13.8" width="11" height="4.4" fill="#702015"/><rect x="-1" y="18" width="11" height="3" fill="#0c0808"/></g><rect width="9" height="20" fill="#101018" opacity=".12"/></g></svg>
<div class="td" style="left:577.2px;top:378.2px;width:auto;text-align:left;letter-spacing:0.08px;">图中人物的1/7比例商…</div>
<div class="td" style="left:720px;top:378.2px;">免费次数生成</div>
<div class="td" style="left:847.3px;top:378.2px;">生成完成</div>
<svg class="abs" style="left:1019px;top:378.9px" width="20" height="20" viewBox="0 0 20 20"><circle cx="10" cy="10" r="10" fill="#1e1f2c"/><path d="M10 4C12.3 4 13.6 5.6 13.4 7.6C13.3 8.4 13.6 8.6 13.4 9.2C13.2 9.8 12.8 10 12.6 10.6C12.3 11.6 12 12.4 12.2 13.2C13.5 14.6 15.6 15.3 17.6 16.4A10 10 0 0 1 2.4 16.4C4.4 15.3 6.5 14.6 7.8 13.2C8 12.4 7.7 11.6 7.4 10.6C7.2 10 6.8 9.8 6.6 9.2C6.4 8.6 6.7 8.4 6.6 7.6C6.4 5.6 7.7 4 10 4z" fill="#f7f7f7"/><path d="M9.3 14.9H10.7L11.1 19.9H8.9z" fill="#1e1f2c"/></svg>
<div class="td" style="left:1030.7px;top:378.2px;">昵称_638</div>
<div class="td" style="left:1176.2px;top:378.2px;width:auto;text-align:left;letter-spacing:0.02px;">68dc08796523414ae0720…</div>
<div class="td" style="left:1328.7px;top:378.2px;letter-spacing:0.045px;">2025-10-03 00:34:15</div>
<div class="ob" style="left:1543.1px;top:376.0px;width:68.8px;background:#fff;border:1px solid #d3d7e0"></div>
<svg class="abs" style="left:1559px;top:383.0px" width="8.4" height="10" viewBox="0 0 9 10.6"><path d="M.6 .6H5.6L8.4 3.4V10H.6z" stroke="#666" stroke-width="1" fill="none" stroke-linejoin="round"/><path d="M5.4 .8V3.6H8.2M2.4 5.4H6.4M2.4 7.6H6.4" stroke="#666" stroke-width=".8" fill="none"/></svg>
<div class="ot" style="left:1576.3px;top:379.2px;color:#444">详情</div>
<div class="ob" style="left:1619px;top:376.0px;width:68.9px;background:#3a8bff"></div>
<svg class="abs" style="left:1634.5px;top:382.6px" width="10" height="10.6" viewBox="0 0 10 10.6"><path d="M1.2 7.4L5.6 .9L8 2.5L3.6 9L.9 9.9z" stroke="#fff" stroke-width=".9" fill="none" stroke-linejoin="round"/><path d="M4.6 2.4L7 4M5.2 10H9.6" stroke="#fff" stroke-width=".9" fill="none"/></svg>
<div class="ot" style="left:1652px;top:379.2px">编辑</div>
<div class="ob" style="left:1695px;top:376.0px;width:69px;background:#f0545c"></div>
<svg class="abs" style="left:1710.8px;top:382.6px" width="9.2" height="10.4" viewBox="0 0 9.2 10.4"><path d="M.3 2.3H8.9M3 2.1V.6H6.2V2.1M1.3 2.5V9.8H7.9V2.5M3.6 4.2V8M5.6 4.2V8" stroke="#fff" stroke-width=".9" fill="none"/></svg>
<div class="ot" style="left:1728px;top:379.2px">删除</div>
<div class="ob" style="left:1772.1px;top:376.0px;width:67.9px;background:#55b82c"></div>
<div class="ot" style="left:1785.6px;top:379.2px">更多</div>
<svg class="abs" style="left:1816.2px;top:385.8px" width="8.4" height="5" viewBox="0 0 8.4 5"><path d="M.5 .6L4.2 4.2L7.9 .6" stroke="#fff" stroke-width=".9" fill="none"/></svg>
<div class="rl" style="top:456px"></div>
<div class="ck" style="left:261.2px;top:426.5px"></div>
<div class="td" style="left:247px;top:423.2px;">2</div>
<div class="td" style="left:391.4px;top:423.2px;width:auto;text-align:left;">68dd41cd…</div>
<svg class="abs" style="left:502px;top:424.0px" width="35" height="20" viewBox="0 0 35 20"><defs><filter id="b2" x="0" y="0" width="1" height="1"><feGaussianBlur stdDeviation=".9"/></filter><clipPath id="k2"><rect width="35" height="20"/></clipPath><linearGradient id="sk" x1="0" y1="0" x2="1" y2="0"><stop offset="0" stop-color="#7f95b5"/><stop offset=".5" stop-color="#e6c9b2"/><stop offset="1" stop-color="#8597b2"/></linearGradient></defs><rect width="35" height="20" fill="#2a2630"/><g clip-path="url(#k2)"><g filter="url(#b2)"><rect x="-1" y="-1" width="37" height="22" fill="#17121a"/><rect x="-1" y="-1" width="37" height="10" fill="url(#sk)"/><rect x="1.5" y="3" width="5" height="6" fill="#a89c92"/><rect x="6" y="4.5" width="4" height="5" fill="#9c5038"/><rect x="10" y="5.5" width="6" height="3.5" fill="#5a4a48"/><rect x="25.5" y="3.6" width="10" height="6.4" fill="#43352f"/><rect x="3" y="8.6" width="25" height="6.6" fill="#7f92ad"/><ellipse cx="14" cy="11.2" rx="5" ry="2.3" fill="#dbe4f0"/><rect x="1.5" y="8.2" width="13" height=".9" fill="#d9a05a" opacity=".75"/><path d="M17.4 21L18 11Q18.6 7 21 6Q24 7 24.6 11L27.4 21z" fill="#2e1719"/><circle cx="22" cy="4.6" r="2.1" fill="#5a4a48"/><circle cx="20.8" cy="6.4" r="1.2" fill="#c9b5a8"/><circle cx="29.8" cy="6" r="3" fill="#f2b25a" opacity=".5"/><circle cx="29.8" cy="5.8" r="1.7" fill="#ffdc8a"/><rect x="29.5" y="7.6" width=".8" height="9" fill="#1a1414"/><rect x="-1" y="15.4" width="37" height="6" fill="#17121a" opacity=".85"/><rect x="-1" y="17.4" width="18" height="1.3" fill="#77777f" opacity=".6"/><rect x="-1" y="-1" width="2" height="22" fill="#15151a"/></g><rect width="35" height="20" fill="#14101a" opacity=".2"/></g></svg>
<div class="td" style="left:577.2px;top:423.2px;width:auto;text-align:left;letter-spacing:0.08px;">威尼斯面具舞会的神秘…</div>
<div class="td" style="left:720px;top:423.2px;">免费次数生成</div>
<div class="td" style="left:847.3px;top:423.2px;">生成完成</div>
<svg class="abs" style="left:1019px;top:423.9px" width="20" height="20" viewBox="0 0 20 20"><circle cx="10" cy="10" r="10" fill="#1e1f2c"/><path d="M10 4C12.3 4 13.6 5.6 13.4 7.6C13.3 8.4 13.6 8.6 13.4 9.2C13.2 9.8 12.8 10 12.6 10.6C12.3 11.6 12 12.4 12.2 13.2C13.5 14.6 15.6 15.3 17.6 16.4A10 10 0 0 1 2.4 16.4C4.4 15.3 6.5 14.6 7.8 13.2C8 12.4 7.7 11.6 7.4 10.6C7.2 10 6.8 9.8 6.6 9.2C6.4 8.6 6.7 8.4 6.6 7.6C6.4 5.6 7.7 4 10 4z" fill="#f7f7f7"/><path d="M9.3 14.9H10.7L11.1 19.9H8.9z" fill="#1e1f2c"/></svg>
<div class="td" style="left:1030.7px;top:423.2px;">昵称_327</div>
<div class="td" style="left:1176.2px;top:423.2px;width:auto;text-align:left;letter-spacing:0.02px;">68dd41b409664cbe6f09d…</div>
<div class="td" style="left:1328.7px;top:423.2px;letter-spacing:0.045px;">2025-10-01 22:59:25</div>
<div class="ob" style="left:1543.1px;top:421.0px;width:68.8px;background:#fff;border:1px solid #d3d7e0"></div>
<svg class="abs" style="left:1559px;top:428.0px" width="8.4" height="10" viewBox="0 0 9 10.6"><path d="M.6 .6H5.6L8.4 3.4V10H.6z" stroke="#666" stroke-width="1" fill="none" stroke-linejoin="round"/><path d="M5.4 .8V3.6H8.2M2.4 5.4H6.4M2.4 7.6H6.4" stroke="#666" stroke-width=".8" fill="none"/></svg>
<div class="ot" style="left:1576.3px;top:424.2px;color:#444">详情</div>
<div class="ob" style="left:1619px;top:421.0px;width:68.9px;background:#3a8bff"></div>
<svg class="abs" style="left:1634.5px;top:427.6px" width="10" height="10.6" viewBox="0 0 10 10.6"><path d="M1.2 7.4L5.6 .9L8 2.5L3.6 9L.9 9.9z" stroke="#fff" stroke-width=".9" fill="none" stroke-linejoin="round"/><path d="M4.6 2.4L7 4M5.2 10H9.6" stroke="#fff" stroke-width=".9" fill="none"/></svg>
<div class="ot" style="left:1652px;top:424.2px">编辑</div>
<div class="ob" style="left:1695px;top:421.0px;width:69px;background:#f0545c"></div>
<svg class="abs" style="left:1710.8px;top:427.6px" width="9.2" height="10.4" viewBox="0 0 9.2 10.4"><path d="M.3 2.3H8.9M3 2.1V.6H6.2V2.1M1.3 2.5V9.8H7.9V2.5M3.6 4.2V8M5.6 4.2V8" stroke="#fff" stroke-width=".9" fill="none"/></svg>
<div class="ot" style="left:1728px;top:424.2px">删除</div>
<div class="ob" style="left:1772.1px;top:421.0px;width:67.9px;background:#55b82c"></div>
<div class="ot" style="left:1785.6px;top:424.2px">更多</div>
<svg class="abs" style="left:1816.2px;top:430.8px" width="8.4" height="5" viewBox="0 0 8.4 5"><path d="M.5 .6L4.2 4.2L7.9 .6" stroke="#fff" stroke-width=".9" fill="none"/></svg>
<div class="rl" style="top:501px"></div>
<div class="ck" style="left:261.2px;top:471.5px"></div>
<div class="td" style="left:247px;top:468.2px;">3</div>
<div class="td" style="left:391.4px;top:468.2px;width:auto;text-align:left;">68d60234…</div>
<div class="td" style="left:558.4px;top:468.2px;letter-spacing:0.08px;">热带雨林中的奇异花朵</div>
<div class="td" style="left:720px;top:468.2px;">免费次数生成</div>
<div class="td" style="left:847.3px;top:468.2px;">生成完成</div>
<svg class="abs" style="left:1019px;top:468.9px" width="20" height="20" viewBox="0 0 20 20"><circle cx="10" cy="10" r="10" fill="#1e1f2c"/><path d="M10 4C12.3 4 13.6 5.6 13.4 7.6C13.3 8.4 13.6 8.6 13.4 9.2C13.2 9.8 12.8 10 12.6 10.6C12.3 11.6 12 12.4 12.2 13.2C13.5 14.6 15.6 15.3 17.6 16.4A10 10 0 0 1 2.4 16.4C4.4 15.3 6.5 14.6 7.8 13.2C8 12.4 7.7 11.6 7.4 10.6C7.2 10 6.8 9.8 6.6 9.2C6.4 8.6 6.7 8.4 6.6 7.6C6.4 5.6 7.7 4 10 4z" fill="#f7f7f7"/><path d="M9.3 14.9H10.7L11.1 19.9H8.9z" fill="#1e1f2c"/></svg>
<div class="td" style="left:1030.7px;top:468.2px;">昵称_584</div>
<div class="td" style="left:1166.4px;top:468.2px;letter-spacing:0.02px;">68d5ff767ad52db7e79fdbf4</div>
<div class="td" style="left:1328.7px;top:468.2px;letter-spacing:0.045px;">2025-09-26 11:02:12</div>
<div class="ob" style="left:1543.1px;top:466.0px;width:68.8px;background:#fff;border:1px solid #d3d7e0"></div>
<svg class="abs" style="left:1559px;top:473.0px" width="8.4" height="10" viewBox="0 0 9 10.6"><path d="M.6 .6H5.6L8.4 3.4V10H.6z" stroke="#666" stroke-width="1" fill="none" stroke-linejoin="round"/><path d="M5.4 .8V3.6H8.2M2.4 5.4H6.4M2.4 7.6H6.4" stroke="#666" stroke-width=".8" fill="none"/></svg>
<div class="ot" style="left:1576.3px;top:469.2px;color:#444">详情</div>
<div class="ob" style="left:1619px;top:466.0px;width:68.9px;background:#3a8bff"></div>
<svg class="abs" style="left:1634.5px;top:472.6px" width="10" height="10.6" viewBox="0 0 10 10.6"><path d="M1.2 7.4L5.6 .9L8 2.5L3.6 9L.9 9.9z" stroke="#fff" stroke-width=".9" fill="none" stroke-linejoin="round"/><path d="M4.6 2.4L7 4M5.2 10H9.6" stroke="#fff" stroke-width=".9" fill="none"/></svg>
<div class="ot" style="left:1652px;top:469.2px">编辑</div>
<div class="ob" style="left:1695px;top:466.0px;width:69px;background:#f0545c"></div>
<svg class="abs" style="left:1710.8px;top:472.6px" width="9.2" height="10.4" viewBox="0 0 9.2 10.4"><path d="M.3 2.3H8.9M3 2.1V.6H6.2V2.1M1.3 2.5V9.8H7.9V2.5M3.6 4.2V8M5.6 4.2V8" stroke="#fff" stroke-width=".9" fill="none"/></svg>
<div class="ot" style="left:1728px;top:469.2px">删除</div>
<div class="ob" style="left:1772.1px;top:466.0px;width:67.9px;background:#55b82c"></div>
<div class="ot" style="left:1785.6px;top:469.2px">更多</div>
<svg class="abs" style="left:1816.2px;top:475.8px" width="8.4" height="5" viewBox="0 0 8.4 5"><path d="M.5 .6L4.2 4.2L7.9 .6" stroke="#fff" stroke-width=".9" fill="none"/></svg>
<div class="rl" style="top:546px"></div>
<div class="ck" style="left:261.2px;top:516.5px"></div>
<div class="td" style="left:247px;top:513.2px;">4</div>
<div class="td" style="left:391.4px;top:513.2px;width:auto;text-align:left;">68d53d01…</div>
<div class="abs" style="left:498px;top:514.0px;width:43px;height:20px;background:#f2f4f9"></div>
<svg class="abs" style="left:513.3px;top:518.8px" width="12.6" height="11" viewBox="0 0 12.6 11"><rect x=".7" y=".7" width="11.2" height="9.6" rx="1.4" fill="none" stroke="#b7bbc6" stroke-width="1.4"/><path d="M1.2 9.4L4.6 5.4L6.8 7.6L8.8 6L11.4 8.2V9.8H1.2z" fill="#b7bbc6"/><circle cx="8.8" cy="3.6" r=".9" fill="#b7bbc6"/></svg>
<div class="td" style="left:577.2px;top:513.2px;width:auto;text-align:left;letter-spacing:0.08px;">根据参考图，进行照片…</div>
<div class="td" style="left:720px;top:513.2px;">会员生成</div>
<div class="td" style="left:847.3px;top:513.2px;">生成完成</div>
<div class="abs" style="left:1019px;top:513.9px;width:20px;height:20px;border-radius:50%;background:#f2f4f9"></div>
<svg class="abs" style="left:1022.8px;top:518.6px" width="12.6" height="11" viewBox="0 0 12.6 11"><rect x=".7" y=".7" width="11.2" height="9.6" rx="1.4" fill="none" stroke="#b7bbc6" stroke-width="1.4"/><path d="M1.2 9.4L4.6 5.4L6.8 7.6L8.8 6L11.4 8.2V9.8H1.2z" fill="#b7bbc6"/><circle cx="8.8" cy="3.6" r=".9" fill="#b7bbc6"/></svg>
<div class="td" style="left:1030.7px;top:513.2px;">昵称_5759</div>
<div class="td" style="left:1176.2px;top:513.2px;width:auto;text-align:left;letter-spacing:0.02px;">68d43fa23d029c7eaa6c9…</div>
<div class="td" style="left:1328.7px;top:513.2px;letter-spacing:0.045px;">2025-09-25 21:00:49</div>
<div class="ob" style="left:1543.1px;top:511.0px;width:68.8px;background:#fff;border:1px solid #d3d7e0"></div>
<svg class="abs" style="left:1559px;top:518.0px" width="8.4" height="10" viewBox="0 0 9 10.6"><path d="M.6 .6H5.6L8.4 3.4V10H.6z" stroke="#666" stroke-width="1" fill="none" stroke-linejoin="round"/><path d="M5.4 .8V3.6H8.2M2.4 5.4H6.4M2.4 7.6H6.4" stroke="#666" stroke-width=".8" fill="none"/></svg>
<div class="ot" style="left:1576.3px;top:514.2px;color:#444">详情</div>
<div class="ob" style="left:1619px;top:511.0px;width:68.9px;background:#3a8bff"></div>
<svg class="abs" style="left:1634.5px;top:517.6px" width="10" height="10.6" viewBox="0 0 10 10.6"><path d="M1.2 7.4L5.6 .9L8 2.5L3.6 9L.9 9.9z" stroke="#fff" stroke-width=".9" fill="none" stroke-linejoin="round"/><path d="M4.6 2.4L7 4M5.2 10H9.6" stroke="#fff" stroke-width=".9" fill="none"/></svg>
<div class="ot" style="left:1652px;top:514.2px">编辑</div>
<div class="ob" style="left:1695px;top:511.0px;width:69px;background:#f0545c"></div>
<svg class="abs" style="left:1710.8px;top:517.6px" width="9.2" height="10.4" viewBox="0 0 9.2 10.4"><path d="M.3 2.3H8.9M3 2.1V.6H6.2V2.1M1.3 2.5V9.8H7.9V2.5M3.6 4.2V8M5.6 4.2V8" stroke="#fff" stroke-width=".9" fill="none"/></svg>
<div class="ot" style="left:1728px;top:514.2px">删除</div>
<div class="ob" style="left:1772.1px;top:511.0px;width:67.9px;background:#55b82c"></div>
<div class="ot" style="left:1785.6px;top:514.2px">更多</div>
<svg class="abs" style="left:1816.2px;top:520.8px" width="8.4" height="5" viewBox="0 0 8.4 5"><path d="M.5 .6L4.2 4.2L7.9 .6" stroke="#fff" stroke-width=".9" fill="none"/></svg>
<div class="rl" style="top:591px"></div>
<div class="ck" style="left:261.2px;top:561.5px"></div>
<div class="td" style="left:247px;top:558.2px;">5</div>
<div class="td" style="left:391.4px;top:558.2px;width:auto;text-align:left;">68d53cab…</div>
<div class="abs" style="left:498px;top:559.0px;width:43px;height:20px;background:#f2f4f9"></div>
<svg class="abs" style="left:513.3px;top:563.8px" width="12.6" height="11" viewBox="0 0 12.6 11"><rect x=".7" y=".7" width="11.2" height="9.6" rx="1.4" fill="none" stroke="#b7bbc6" stroke-width="1.4"/><path d="M1.2 9.4L4.6 5.4L6.8 7.6L8.8 6L11.4 8.2V9.8H1.2z" fill="#b7bbc6"/><circle cx="8.8" cy="3.6" r=".9" fill="#b7bbc6"/></svg>
<div class="td" style="left:577.2px;top:558.2px;width:auto;text-align:left;letter-spacing:0.08px;">根据参考图，进行照片…</div>
<div class="td" style="left:720px;top:558.2px;">会员生成</div>
<div class="td" style="left:847.3px;top:558.2px;">生成完成</div>
<div class="abs" style="left:1019px;top:558.9px;width:20px;height:20px;border-radius:50%;background:#f2f4f9"></div>
<svg class="abs" style="left:1022.8px;top:563.6px" width="12.6" height="11" viewBox="0 0 12.6 11"><rect x=".7" y=".7" width="11.2" height="9.6" rx="1.4" fill="none" stroke="#b7bbc6" stroke-width="1.4"/><path d="M1.2 9.4L4.6 5.4L6.8 7.6L8.8 6L11.4 8.2V9.8H1.2z" fill="#b7bbc6"/><circle cx="8.8" cy="3.6" r=".9" fill="#b7bbc6"/></svg>
<div class="td" style="left:1030.7px;top:558.2px;">昵称_5759</div>
<div class="td" style="left:1176.2px;top:558.2px;width:auto;text-align:left;letter-spacing:0.02px;">68d43fa23d029c7eaa6c9…</div>
<div class="td" style="left:1328.7px;top:558.2px;letter-spacing:0.045px;">2025-09-25 20:59:23</div>
<div class="ob" style="left:1543.1px;top:556.0px;width:68.8px;background:#fff;border:1px solid #d3d7e0"></div>
<svg class="abs" style="left:1559px;top:563.0px" width="8.4" height="10" viewBox="0 0 9 10.6"><path d="M.6 .6H5.6L8.4 3.4V10H.6z" stroke="#666" stroke-width="1" fill="none" stroke-linejoin="round"/><path d="M5.4 .8V3.6H8.2M2.4 5.4H6.4M2.4 7.6H6.4" stroke="#666" stroke-width=".8" fill="none"/></svg>
<div class="ot" style="left:1576.3px;top:559.2px;color:#444">详情</div>
<div class="ob" style="left:1619px;top:556.0px;width:68.9px;background:#3a8bff"></div>
<svg class="abs" style="left:1634.5px;top:562.6px" width="10" height="10.6" viewBox="0 0 10 10.6"><path d="M1.2 7.4L5.6 .9L8 2.5L3.6 9L.9 9.9z" stroke="#fff" stroke-width=".9" fill="none" stroke-linejoin="round"/><path d="M4.6 2.4L7 4M5.2 10H9.6" stroke="#fff" stroke-width=".9" fill="none"/></svg>
<div class="ot" style="left:1652px;top:559.2px">编辑</div>
<div class="ob" style="left:1695px;top:556.0px;width:69px;background:#f0545c"></div>
<svg class="abs" style="left:1710.8px;top:562.6px" width="9.2" height="10.4" viewBox="0 0 9.2 10.4"><path d="M.3 2.3H8.9M3 2.1V.6H6.2V2.1M1.3 2.5V9.8H7.9V2.5M3.6 4.2V8M5.6 4.2V8" stroke="#fff" stroke-width=".9" fill="none"/></svg>
<div class="ot" style="left:1728px;top:559.2px">删除</div>
<div class="ob" style="left:1772.1px;top:556.0px;width:67.9px;background:#55b82c"></div>
<div class="ot" style="left:1785.6px;top:559.2px">更多</div>
<svg class="abs" style="left:1816.2px;top:565.8px" width="8.4" height="5" viewBox="0 0 8.4 5"><path d="M.5 .6L4.2 4.2L7.9 .6" stroke="#fff" stroke-width=".9" fill="none"/></svg>
<div class="rl" style="top:636px"></div>
<div class="ck" style="left:261.2px;top:606.5px"></div>
<div class="td" style="left:247px;top:603.2px;">6</div>
<div class="td" style="left:391.4px;top:603.2px;width:auto;text-align:left;">68d53c87…</div>
<div class="abs" style="left:498px;top:604.0px;width:43px;height:20px;background:#f2f4f9"></div>
<svg class="abs" style="left:513.3px;top:608.8px" width="12.6" height="11" viewBox="0 0 12.6 11"><rect x=".7" y=".7" width="11.2" height="9.6" rx="1.4" fill="none" stroke="#b7bbc6" stroke-width="1.4"/><path d="M1.2 9.4L4.6 5.4L6.8 7.6L8.8 6L11.4 8.2V9.8H1.2z" fill="#b7bbc6"/><circle cx="8.8" cy="3.6" r=".9" fill="#b7bbc6"/></svg>
<div class="td" style="left:577.2px;top:603.2px;width:auto;text-align:left;letter-spacing:0.08px;">根据参考图，进行照片…</div>
<div class="td" style="left:720px;top:603.2px;">会员生成</div>
<div class="td" style="left:847.3px;top:603.2px;">生成完成</div>
<div class="abs" style="left:1019px;top:603.9px;width:20px;height:20px;border-radius:50%;background:#f2f4f9"></div>
<svg class="abs" style="left:1022.8px;top:608.6px" width="12.6" height="11" viewBox="0 0 12.6 11"><rect x=".7" y=".7" width="11.2" height="9.6" rx="1.4" fill="none" stroke="#b7bbc6" stroke-width="1.4"/><path d="M1.2 9.4L4.6 5.4L6.8 7.6L8.8 6L11.4 8.2V9.8H1.2z" fill="#b7bbc6"/><circle cx="8.8" cy="3.6" r=".9" fill="#b7bbc6"/></svg>
<div class="td" style="left:1030.7px;top:603.2px;">昵称_5759</div>
<div class="td" style="left:1176.2px;top:603.2px;width:auto;text-align:left;letter-spacing:0.02px;">68d43fa23d029c7eaa6c9…</div>
<div class="td" style="left:1328.7px;top:603.2px;letter-spacing:0.045px;">2025-09-25 20:58:47</div>
<div class="ob" style="left:1543.1px;top:601.0px;width:68.8px;background:#fff;border:1px solid #d3d7e0"></div>
<svg class="abs" style="left:1559px;top:608.0px" width="8.4" height="10" viewBox="0 0 9 10.6"><path d="M.6 .6H5.6L8.4 3.4V10H.6z" stroke="#666" stroke-width="1" fill="none" stroke-linejoin="round"/><path d="M5.4 .8V3.6H8.2M2.4 5.4H6.4M2.4 7.6H6.4" stroke="#666" stroke-width=".8" fill="none"/></svg>
<div class="ot" style="left:1576.3px;top:604.2px;color:#444">详情</div>
<div class="ob" style="left:1619px;top:601.0px;width:68.9px;background:#3a8bff"></div>
<svg class="abs" style="left:1634.5px;top:607.6px" width="10" height="10.6" viewBox="0 0 10 10.6"><path d="M1.2 7.4L5.6 .9L8 2.5L3.6 9L.9 9.9z" stroke="#fff" stroke-width=".9" fill="none" stroke-linejoin="round"/><path d="M4.6 2.4L7 4M5.2 10H9.6" stroke="#fff" stroke-width=".9" fill="none"/></svg>
<div class="ot" style="left:1652px;top:604.2px">编辑</div>
<div class="ob" style="left:1695px;top:601.0px;width:69px;background:#f0545c"></div>
<svg class="abs" style="left:1710.8px;top:607.6px" width="9.2" height="10.4" viewBox="0 0 9.2 10.4"><path d="M.3 2.3H8.9M3 2.1V.6H6.2V2.1M1.3 2.5V9.8H7.9V2.5M3.6 4.2V8M5.6 4.2V8" stroke="#fff" stroke-width=".9" fill="none"/></svg>
<div class="ot" style="left:1728px;top:604.2px">删除</div>
<div class="ob" style="left:1772.1px;top:601.0px;width:67.9px;background:#55b82c"></div>
<div class="ot" style="left:1785.6px;top:604.2px">更多</div>
<svg class="abs" style="left:1816.2px;top:610.8px" width="8.4" height="5" viewBox="0 0 8.4 5"><path d="M.5 .6L4.2 4.2L7.9 .6" stroke="#fff" stroke-width=".9" fill="none"/></svg>
<div class="rl" style="top:681px"></div>
<div class="ck" style="left:261.2px;top:651.5px"></div>
<div class="td" style="left:247px;top:648.2px;">7</div>
<div class="td" style="left:391.4px;top:648.2px;width:auto;text-align:left;">68d4aad2…</div>
<div class="abs" style="left:498px;top:649.0px;width:43px;height:20px;background:#f2f4f9"></div>
<svg class="abs" style="left:513.3px;top:653.8px" width="12.6" height="11" viewBox="0 0 12.6 11"><rect x=".7" y=".7" width="11.2" height="9.6" rx="1.4" fill="none" stroke="#b7bbc6" stroke-width="1.4"/><path d="M1.2 9.4L4.6 5.4L6.8 7.6L8.8 6L11.4 8.2V9.8H1.2z" fill="#b7bbc6"/><circle cx="8.8" cy="3.6" r=".9" fill="#b7bbc6"/></svg>
<div class="td" style="left:577.2px;top:648.2px;width:auto;text-align:left;letter-spacing:0.08px;">威尼斯面具舞会的神秘…</div>
<div class="td" style="left:720px;top:648.2px;">免费次数生成</div>
<div class="td" style="left:847.3px;top:648.2px;">生成完成</div>
<svg class="abs" style="left:1019px;top:648.9px" width="20" height="20" viewBox="0 0 20 20"><circle cx="10" cy="10" r="10" fill="#1e1f2c"/><path d="M10 4C12.3 4 13.6 5.6 13.4 7.6C13.3 8.4 13.6 8.6 13.4 9.2C13.2 9.8 12.8 10 12.6 10.6C12.3 11.6 12 12.4 12.2 13.2C13.5 14.6 15.6 15.3 17.6 16.4A10 10 0 0 1 2.4 16.4C4.4 15.3 6.5 14.6 7.8 13.2C8 12.4 7.7 11.6 7.4 10.6C7.2 10 6.8 9.8 6.6 9.2C6.4 8.6 6.7 8.4 6.6 7.6C6.4 5.6 7.7 4 10 4z" fill="#f7f7f7"/><path d="M9.3 14.9H10.7L11.1 19.9H8.9z" fill="#1e1f2c"/></svg>
<div class="td" style="left:1030.7px;top:648.2px;">昵称_359</div>
<div class="td" style="left:1176.2px;top:648.2px;width:auto;text-align:left;letter-spacing:0.02px;">68d117118b0da441dc7b6…</div>
<div class="td" style="left:1328.7px;top:648.2px;letter-spacing:0.045px;">2025-09-25 10:37:06</div>
<div class="ob" style="left:1543.1px;top:646.0px;width:68.8px;background:#fff;border:1px solid #d3d7e0"></div>
<svg class="abs" style="left:1559px;top:653.0px" width="8.4" height="10" viewBox="0 0 9 10.6"><path d="M.6 .6H5.6L8.4 3.4V10H.6z" stroke="#666" stroke-width="1" fill="none" stroke-linejoin="round"/><path d="M5.4 .8V3.6H8.2M2.4 5.4H6.4M2.4 7.6H6.4" stroke="#666" stroke-width=".8" fill="none"/></svg>
<div class="ot" style="left:1576.3px;top:649.2px;color:#444">详情</div>
<div class="ob" style="left:1619px;top:646.0px;width:68.9px;background:#3a8bff"></div>
<svg class="abs" style="left:1634.5px;top:652.6px" width="10" height="10.6" viewBox="0 0 10 10.6"><path d="M1.2 7.4L5.6 .9L8 2.5L3.6 9L.9 9.9z" stroke="#fff" stroke-width=".9" fill="none" stroke-linejoin="round"/><path d="M4.6 2.4L7 4M5.2 10H9.6" stroke="#fff" stroke-width=".9" fill="none"/></svg>
<div class="ot" style="left:1652px;top:649.2px">编辑</div>
<div class="ob" style="left:1695px;top:646.0px;width:69px;background:#f0545c"></div>
<svg class="abs" style="left:1710.8px;top:652.6px" width="9.2" height="10.4" viewBox="0 0 9.2 10.4"><path d="M.3 2.3H8.9M3 2.1V.6H6.2V2.1M1.3 2.5V9.8H7.9V2.5M3.6 4.2V8M5.6 4.2V8" stroke="#fff" stroke-width=".9" fill="none"/></svg>
<div class="ot" style="left:1728px;top:649.2px">删除</div>
<div class="ob" style="left:1772.1px;top:646.0px;width:67.9px;background:#55b82c"></div>
<div class="ot" style="left:1785.6px;top:649.2px">更多</div>
<svg class="abs" style="left:1816.2px;top:655.8px" width="8.4" height="5" viewBox="0 0 8.4 5"><path d="M.5 .6L4.2 4.2L7.9 .6" stroke="#fff" stroke-width=".9" fill="none"/></svg>
<div class="rl" style="top:726px"></div>
<div class="ck" style="left:261.2px;top:696.5px"></div>
<div class="td" style="left:247px;top:693.2px;">8</div>
<div class="td" style="left:391.4px;top:693.2px;width:auto;text-align:left;">68d4aaac…</div>
<div class="abs" style="left:498px;top:694.0px;width:43px;height:20px;background:#f2f4f9"></div>
<svg class="abs" style="left:513.3px;top:698.8px" width="12.6" height="11" viewBox="0 0 12.6 11"><rect x=".7" y=".7" width="11.2" height="9.6" rx="1.4" fill="none" stroke="#b7bbc6" stroke-width="1.4"/><path d="M1.2 9.4L4.6 5.4L6.8 7.6L8.8 6L11.4 8.2V9.8H1.2z" fill="#b7bbc6"/><circle cx="8.8" cy="3.6" r=".9" fill="#b7bbc6"/></svg>
<div class="td" style="left:577.2px;top:693.2px;width:auto;text-align:left;letter-spacing:0.08px;">威尼斯面具舞会的神秘…</div>
<div class="td" style="left:720px;top:693.2px;">免费次数生成</div>
<div class="td" style="left:847.3px;top:693.2px;">生成完成</div>
<svg class="abs" style="left:1019px;top:693.9px" width="20" height="20" viewBox="0 0 20 20"><circle cx="10" cy="10" r="10" fill="#1e1f2c"/><path d="M10 4C12.3 4 13.6 5.6 13.4 7.6C13.3 8.4 13.6 8.6 13.4 9.2C13.2 9.8 12.8 10 12.6 10.6C12.3 11.6 12 12.4 12.2 13.2C13.5 14.6 15.6 15.3 17.6 16.4A10 10 0 0 1 2.4 16.4C4.4 15.3 6.5 14.6 7.8 13.2C8 12.4 7.7 11.6 7.4 10.6C7.2 10 6.8 9.8 6.6 9.2C6.4 8.6 6.7 8.4 6.6 7.6C6.4 5.6 7.7 4 10 4z" fill="#f7f7f7"/><path d="M9.3 14.9H10.7L11.1 19.9H8.9z" fill="#1e1f2c"/></svg>
<div class="td" style="left:1030.7px;top:693.2px;">昵称_359</div>
<div class="td" style="left:1176.2px;top:693.2px;width:auto;text-align:left;letter-spacing:0.02px;">68d117118b0da441dc7b6…</div>
<div class="td" style="left:1328.7px;top:693.2px;letter-spacing:0.045px;">2025-09-25 10:36:28</div>
<div class="ob" style="left:1543.1px;top:691.0px;width:68.8px;background:#fff;border:1px solid #d3d7e0"></div>
<svg class="abs" style="left:1559px;top:698.0px" width="8.4" height="10" viewBox="0 0 9 10.6"><path d="M.6 .6H5.6L8.4 3.4V10H.6z" stroke="#666" stroke-width="1" fill="none" stroke-linejoin="round"/><path d="M5.4 .8V3.6H8.2M2.4 5.4H6.4M2.4 7.6H6.4" stroke="#666" stroke-width=".8" fill="none"/></svg>
<div class="ot" style="left:1576.3px;top:694.2px;color:#444">详情</div>
<div class="ob" style="left:1619px;top:691.0px;width:68.9px;background:#3a8bff"></div>
<svg class="abs" style="left:1634.5px;top:697.6px" width="10" height="10.6" viewBox="0 0 10 10.6"><path d="M1.2 7.4L5.6 .9L8 2.5L3.6 9L.9 9.9z" stroke="#fff" stroke-width=".9" fill="none" stroke-linejoin="round"/><path d="M4.6 2.4L7 4M5.2 10H9.6" stroke="#fff" stroke-width=".9" fill="none"/></svg>
<div class="ot" style="left:1652px;top:694.2px">编辑</div>
<div class="ob" style="left:1695px;top:691.0px;width:69px;background:#f0545c"></div>
<svg class="abs" style="left:1710.8px;top:697.6px" width="9.2" height="10.4" viewBox="0 0 9.2 10.4"><path d="M.3 2.3H8.9M3 2.1V.6H6.2V2.1M1.3 2.5V9.8H7.9V2.5M3.6 4.2V8M5.6 4.2V8" stroke="#fff" stroke-width=".9" fill="none"/></svg>
<div class="ot" style="left:1728px;top:694.2px">删除</div>
<div class="ob" style="left:1772.1px;top:691.0px;width:67.9px;background:#55b82c"></div>
<div class="ot" style="left:1785.6px;top:694.2px">更多</div>
<svg class="abs" style="left:1816.2px;top:700.8px" width="8.4" height="5" viewBox="0 0 8.4 5"><path d="M.5 .6L4.2 4.2L7.9 .6" stroke="#fff" stroke-width=".9" fill="none"/></svg>
<div class="rl" style="top:771px"></div>
<div class="ck" style="left:261.2px;top:741.5px"></div>
<div class="td" style="left:247px;top:738.2px;">9</div>
<div class="td" style="left:391.4px;top:738.2px;width:auto;text-align:left;">68d440e6…</div>
<div class="abs" style="left:498px;top:739.0px;width:43px;height:20px;background:#f2f4f9"></div>
<svg class="abs" style="left:513.3px;top:743.8px" width="12.6" height="11" viewBox="0 0 12.6 11"><rect x=".7" y=".7" width="11.2" height="9.6" rx="1.4" fill="none" stroke="#b7bbc6" stroke-width="1.4"/><path d="M1.2 9.4L4.6 5.4L6.8 7.6L8.8 6L11.4 8.2V9.8H1.2z" fill="#b7bbc6"/><circle cx="8.8" cy="3.6" r=".9" fill="#b7bbc6"/></svg>
<div class="td" style="left:577.2px;top:738.2px;width:auto;text-align:left;letter-spacing:0.08px;">图中人物的1/7比例商…</div>
<div class="td" style="left:720px;top:738.2px;">10</div>
<div class="td" style="left:847.3px;top:738.2px;">生成完成</div>
<div class="abs" style="left:1019px;top:738.9px;width:20px;height:20px;border-radius:50%;background:#f2f4f9"></div>
<svg class="abs" style="left:1022.8px;top:743.6px" width="12.6" height="11" viewBox="0 0 12.6 11"><rect x=".7" y=".7" width="11.2" height="9.6" rx="1.4" fill="none" stroke="#b7bbc6" stroke-width="1.4"/><path d="M1.2 9.4L4.6 5.4L6.8 7.6L8.8 6L11.4 8.2V9.8H1.2z" fill="#b7bbc6"/><circle cx="8.8" cy="3.6" r=".9" fill="#b7bbc6"/></svg>
<div class="td" style="left:1030.7px;top:738.2px;">昵称_5759</div>
<div class="td" style="left:1176.2px;top:738.2px;width:auto;text-align:left;letter-spacing:0.02px;">68d43fa23d029c7eaa6c9…</div>
<div class="td" style="left:1328.7px;top:738.2px;letter-spacing:0.045px;">2025-09-25 03:05:10</div>
<div class="ob" style="left:1543.1px;top:736.0px;width:68.8px;background:#fff;border:1px solid #d3d7e0"></div>
<svg class="abs" style="left:1559px;top:743.0px" width="8.4" height="10" viewBox="0 0 9 10.6"><path d="M.6 .6H5.6L8.4 3.4V10H.6z" stroke="#666" stroke-width="1" fill="none" stroke-linejoin="round"/><path d="M5.4 .8V3.6H8.2M2.4 5.4H6.4M2.4 7.6H6.4" stroke="#666" stroke-width=".8" fill="none"/></svg>
<div class="ot" style="left:1576.3px;top:739.2px;color:#444">详情</div>
<div class="ob" style="left:1619px;top:736.0px;width:68.9px;background:#3a8bff"></div>
<svg class="abs" style="left:1634.5px;top:742.6px" width="10" height="10.6" viewBox="0 0 10 10.6"><path d="M1.2 7.4L5.6 .9L8 2.5L3.6 9L.9 9.9z" stroke="#fff" stroke-width=".9" fill="none" stroke-linejoin="round"/><path d="M4.6 2.4L7 4M5.2 10H9.6" stroke="#fff" stroke-width=".9" fill="none"/></svg>
<div class="ot" style="left:1652px;top:739.2px">编辑</div>
<div class="ob" style="left:1695px;top:736.0px;width:69px;background:#f0545c"></div>
<svg class="abs" style="left:1710.8px;top:742.6px" width="9.2" height="10.4" viewBox="0 0 9.2 10.4"><path d="M.3 2.3H8.9M3 2.1V.6H6.2V2.1M1.3 2.5V9.8H7.9V2.5M3.6 4.2V8M5.6 4.2V8" stroke="#fff" stroke-width=".9" fill="none"/></svg>
<div class="ot" style="left:1728px;top:739.2px">删除</div>
<div class="ob" style="left:1772.1px;top:736.0px;width:67.9px;background:#55b82c"></div>
<div class="ot" style="left:1785.6px;top:739.2px">更多</div>
<svg class="abs" style="left:1816.2px;top:745.8px" width="8.4" height="5" viewBox="0 0 8.4 5"><path d="M.5 .6L4.2 4.2L7.9 .6" stroke="#fff" stroke-width=".9" fill="none"/></svg>
<div class="rl" style="top:816px"></div>
<div class="ck" style="left:261.2px;top:786.5px"></div>
<div class="td" style="left:247px;top:783.2px;">10</div>
<div class="td" style="left:391.4px;top:783.2px;width:auto;text-align:left;">68d44090…</div>
<div class="abs" style="left:498px;top:784.0px;width:43px;height:20px;background:#f2f4f9"></div>
<svg class="abs" style="left:513.3px;top:788.8px" width="12.6" height="11" viewBox="0 0 12.6 11"><rect x=".7" y=".7" width="11.2" height="9.6" rx="1.4" fill="none" stroke="#b7bbc6" stroke-width="1.4"/><path d="M1.2 9.4L4.6 5.4L6.8 7.6L8.8 6L11.4 8.2V9.8H1.2z" fill="#b7bbc6"/><circle cx="8.8" cy="3.6" r=".9" fill="#b7bbc6"/></svg>
<div class="td" style="left:577.2px;top:783.2px;width:auto;text-align:left;letter-spacing:0.08px;">请参考图中的人物面部…</div>
<div class="td" style="left:720px;top:783.2px;">免费次数生成</div>
<div class="td" style="left:847.3px;top:783.2px;">生成完成</div>
<div class="abs" style="left:1019px;top:783.9px;width:20px;height:20px;border-radius:50%;background:#f2f4f9"></div>
<svg class="abs" style="left:1022.8px;top:788.6px" width="12.6" height="11" viewBox="0 0 12.6 11"><rect x=".7" y=".7" width="11.2" height="9.6" rx="1.4" fill="none" stroke="#b7bbc6" stroke-width="1.4"/><path d="M1.2 9.4L4.6 5.4L6.8 7.6L8.8 6L11.4 8.2V9.8H1.2z" fill="#b7bbc6"/><circle cx="8.8" cy="3.6" r=".9" fill="#b7bbc6"/></svg>
<div class="td" style="left:1030.7px;top:783.2px;">昵称_5759</div>
<div class="td" style="left:1176.2px;top:783.2px;width:auto;text-align:left;letter-spacing:0.02px;">68d43fa23d029c7eaa6c9…</div>
<div class="td" style="left:1328.7px;top:783.2px;letter-spacing:0.045px;">2025-09-25 03:03:44</div>
<div class="ob" style="left:1543.1px;top:781.0px;width:68.8px;background:#fff;border:1px solid #d3d7e0"></div>
<svg class="abs" style="left:1559px;top:788.0px" width="8.4" height="10" viewBox="0 0 9 10.6"><path d="M.6 .6H5.6L8.4 3.4V10H.6z" stroke="#666" stroke-width="1" fill="none" stroke-linejoin="round"/><path d="M5.4 .8V3.6H8.2M2.4 5.4H6.4M2.4 7.6H6.4" stroke="#666" stroke-width=".8" fill="none"/></svg>
<div class="ot" style="left:1576.3px;top:784.2px;color:#444">详情</div>
<div class="ob" style="left:1619px;top:781.0px;width:68.9px;background:#3a8bff"></div>
<svg class="abs" style="left:1634.5px;top:787.6px" width="10" height="10.6" viewBox="0 0 10 10.6"><path d="M1.2 7.4L5.6 .9L8 2.5L3.6 9L.9 9.9z" stroke="#fff" stroke-width=".9" fill="none" stroke-linejoin="round"/><path d="M4.6 2.4L7 4M5.2 10H9.6" stroke="#fff" stroke-width=".9" fill="none"/></svg>
<div class="ot" style="left:1652px;top:784.2px">编辑</div>
<div class="ob" style="left:1695px;top:781.0px;width:69px;background:#f0545c"></div>
<svg class="abs" style="left:1710.8px;top:787.6px" width="9.2" height="10.4" viewBox="0 0 9.2 10.4"><path d="M.3 2.3H8.9M3 2.1V.6H6.2V2.1M1.3 2.5V9.8H7.9V2.5M3.6 4.2V8M5.6 4.2V8" stroke="#fff" stroke-width=".9" fill="none"/></svg>
<div class="ot" style="left:1728px;top:784.2px">删除</div>
<div class="ob" style="left:1772.1px;top:781.0px;width:67.9px;background:#55b82c"></div>
<div class="ot" style="left:1785.6px;top:784.2px">更多</div>
<svg class="abs" style="left:1816.2px;top:790.8px" width="8.4" height="5" viewBox="0 0 8.4 5"><path d="M.5 .6L4.2 4.2L7.9 .6" stroke="#fff" stroke-width=".9" fill="none"/></svg>
<div class="rl" style="top:986px"></div>
<div class="pg" style="left:827.6px;top:1002px">共 39 条</div>
<div class="abs" style="left:884.4px;top:999.1px;width:89.4px;height:25.6px;border:1px solid #c9cedb;border-radius:3px;background:#fff"></div>
<div class="pg" style="left:901.6px;top:1001.8px;font-size:11.25px">10条/页</div>
<svg class="abs" style="left:958.4px;top:1009.6px" width="7.6" height="4.6" viewBox="0 0 7.6 4.6"><path d="M.5 .5L3.8 3.9L7.1 .5" stroke="#b8bcc6" stroke-width=".9" fill="none"/></svg>
<div class="pb" style="left:992.2px"></div>
<div class="pb on" style="left:1028.1px">1</div>
<div class="pb" style="left:1064.1px">2</div>
<div class="pb" style="left:1100.1px">3</div>
<div class="pb" style="left:1136.1px">4</div>
<div class="pb" style="left:1172.1px"></div>
<svg class="abs" style="left:1002.6px;top:1007.3px" width="5.4" height="9.4" viewBox="0 0 5.4 9.4"><path d="M4.8 .5L.7 4.7L4.8 8.9" stroke="#bbb" stroke-width="1" fill="none"/></svg>
<svg class="abs" style="left:1183px;top:1007.3px" width="5.4" height="9.4" viewBox="0 0 5.4 9.4"><path d="M.6 .5L4.7 4.7L.6 8.9" stroke="#444" stroke-width="1" fill="none"/></svg>
<div class="pg" style="left:1224.8px;top:1002px">前往</div>
<div class="abs" style="left:1252.2px;top:999.1px;width:40.4px;height:25.6px;border:1px solid #c9cedb;border-radius:3px;background:#fff"></div>
<div class="pg" style="left:1269px;top:1002px">1</div>
<div class="pg" style="left:1297.4px;top:1002px">页</div>
</div>
</body>
</html>
